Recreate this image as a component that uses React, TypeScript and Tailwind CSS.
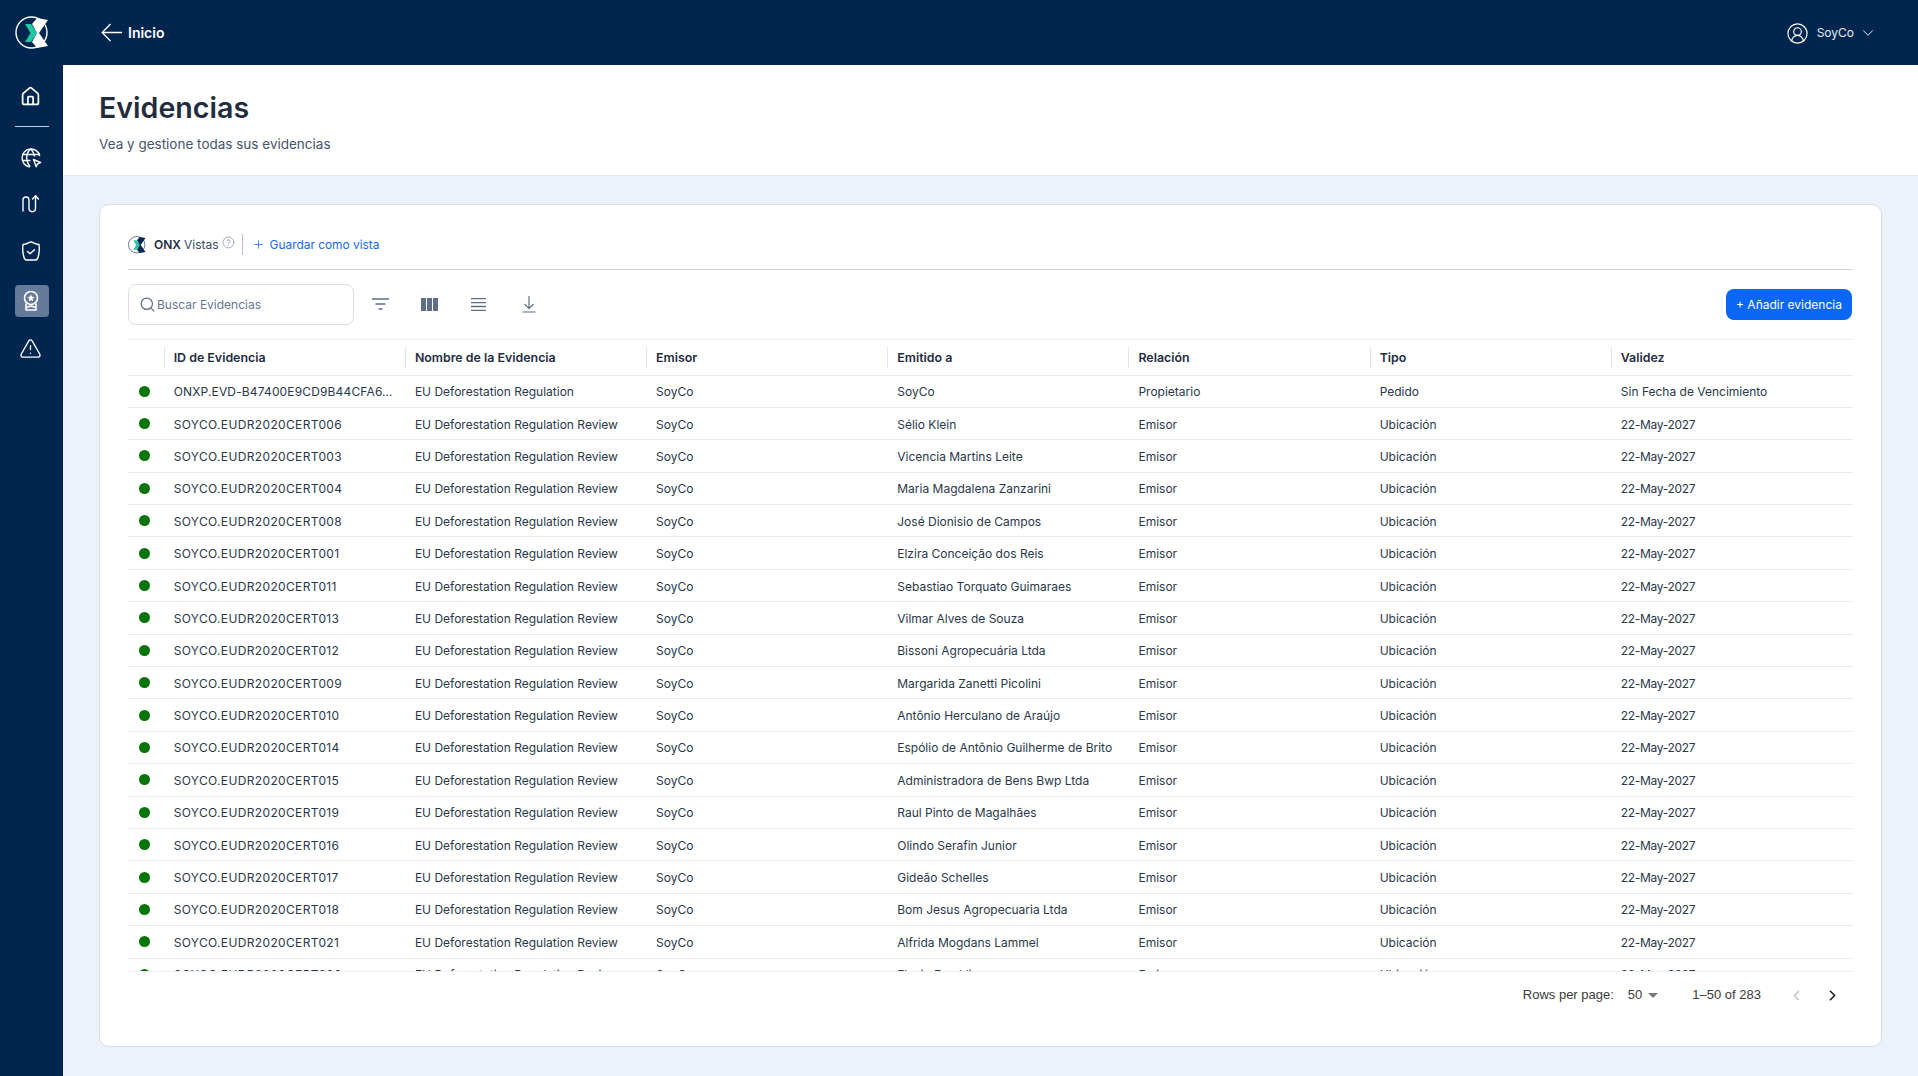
import React from "react";
import { ChevronDown, ChevronLeft, ChevronRight, CircleUserRound, Home, TriangleAlert, Search, Plus, CircleHelp } from "lucide-react";

const names = [
  ["SOYCO.EUDR2020CERT006", "Sélio Klein"],
  ["SOYCO.EUDR2020CERT003", "Vicencia Martins Leite"],
  ["SOYCO.EUDR2020CERT004", "Maria Magdalena Zanzarini"],
  ["SOYCO.EUDR2020CERT008", "José Dionisio de Campos"],
  ["SOYCO.EUDR2020CERT001", "Elzira Conceição dos Reis"],
  ["SOYCO.EUDR2020CERT011", "Sebastiao Torquato Guimaraes"],
  ["SOYCO.EUDR2020CERT013", "Vilmar Alves de Souza"],
  ["SOYCO.EUDR2020CERT012", "Bissoni Agropecuária Ltda"],
  ["SOYCO.EUDR2020CERT009", "Margarida Zanetti Picolini"],
  ["SOYCO.EUDR2020CERT010", "Antônio Herculano de Araújo"],
  ["SOYCO.EUDR2020CERT014", "Espólio de Antônio Guilherme de Brito"],
  ["SOYCO.EUDR2020CERT015", "Administradora de Bens Bwp Ltda"],
  ["SOYCO.EUDR2020CERT019", "Raul Pinto de Magalhães"],
  ["SOYCO.EUDR2020CERT016", "Olindo Serafin Junior"],
  ["SOYCO.EUDR2020CERT017", "Gideão Schelles"],
  ["SOYCO.EUDR2020CERT018", "Bom Jesus Agropecuaria Ltda"],
  ["SOYCO.EUDR2020CERT021", "Alfrida Mogdans Lammel"],
  ["SOYCO.EUDR2020CERT020", "Flavio Franklin"],
];
const rows = [
  ["ONXP.EVD-B47400E9CD9B44CFA6…", "EU Deforestation Regulation", "SoyCo", "SoyCo", "Propietario", "Pedido", "Sin Fecha de Vencimiento"],
  ...names.map(([id, to]) => [id, "EU Deforestation Regulation Review", "SoyCo", to, "Emisor", "Ubicación", "22-May-2027"]),
];
const heads = ["ID de Evidencia", "Nombre de la Evidencia", "Emisor", "Emitido a", "Relación", "Tipo", "Validez"];

function Logo({ size, dark }: { size: number; dark?: boolean }) {
  const c = dark ? "#33475f" : "#ffffff";
  return (
    <svg width={size} height={size} viewBox="0 0 34 34" fill="none">
      <circle cx="16.500" cy="16.500" r="15.500" stroke={c} strokeWidth="1.400" />
      <path d="M10 8h6l6 9-6 9h-6l5.500-9z" fill="#1fc8a0" />
      <path d="M22 2l11 2-9 13 9 13-11 2-5-6 5-9-5-9z" fill={dark ? "#002855" : "#ffffff"} />
    </svg>
  );
}

function SideItem({ children, active }: { children: React.ReactNode; active?: boolean }) {
  return (
    <div className={`w-[34px] h-[32px] flex items-center justify-center pr-[2px] rounded-[4px] ${active ? "bg-[#667a99]" : ""}`}>{children}</div>
  );
}

export default function App() {
  return (
    <div className="w-[1918px] h-[1076px] flex overflow-hidden bg-[#edf1f9] text-[#1f2d3f] [font-family:Inter,'Liberation_Sans',sans-serif]">
      <aside className="w-[63px] shrink-0 bg-[#002650] flex flex-col items-center">
        <div className="h-[65px] flex items-center justify-center"><Logo size={34} /></div>
        <div className="mt-[14px]">
          <SideItem><Home size={21} color="#fff" strokeWidth={2} className="translate-y-[1px]" /></SideItem>
        </div>
        <div className="w-[34px] h-px bg-[#c5cfdc] mt-[15px] mb-[14.500px]" />
        <div className="flex flex-col gap-[15.800px]">
          <SideItem>
            <svg width="22" height="22" viewBox="0 0 22 22" fill="none" stroke="#fff" strokeWidth="1.400">
              <path d="M19.800 9A9 9 0 1 0 10 19.900" />
              <path d="M2 7.500h17M2 13.500h8.500M10.500 2c-2.600 2.500-3.800 5.500-3.800 8.500s1.200 6.500 3.500 9M10.800 2c2.200 2.300 3.400 4.800 3.700 7.500" />
              <path d="M13.500 12.500l7 3-3 1.300-1.300 3z" strokeLinejoin="round" />
            </svg>
          </SideItem>
          <SideItem>
            <svg width="20" height="20" viewBox="0 0 20 20" fill="none" stroke="#fff" strokeWidth="1.400" strokeLinecap="round" strokeLinejoin="round" className="-translate-y-[1px]">
              <path d="M2 17V6a3 3 0 0 1 6 0v9a3.300 3.300 0 0 0 6.500 0V2" />
              <path d="M11.500 5l3-3.300 3 3.300" />
            </svg>
          </SideItem>
          <SideItem>
            <svg width="20" height="22" viewBox="0 0 20 22" fill="none" stroke="#fff" strokeWidth="1.400" strokeLinecap="round" strokeLinejoin="round" className="-translate-y-[2px]">
              <path d="M2 4.500C7 4.500 7.500 2 10 2s3 2.500 8 2.500c.5 4 .3 8-.5 11-.5 2.500-1.500 4.500-3 4.500h-9c-1.500 0-2.500-2-3-4.500-.8-3-1-7-.5-11z" />
              <path d="M6.500 11.500l2.500 2.300 4.500-4" />
            </svg>
          </SideItem>
          <SideItem active>
            <svg width="20" height="22" viewBox="0 0 20 22" fill="none" stroke="#fff" strokeWidth="1.600" strokeLinejoin="round">
              <circle cx="10" cy="8" r="6.500" />
              <path d="M10 4.500l1.100 2.300 2.400.3-1.800 1.700.5 2.400-2.200-1.200-2.200 1.200.5-2.400-1.800-1.700 2.400-.3z" fill="#fff" stroke="none" />
              <path d="M5 13.500V20h10v-6.500M5 17.500l5-1.500 5 1.500" />
            </svg>
          </SideItem>
          <SideItem><TriangleAlert size={23} color="#fff" strokeWidth={1.400} /></SideItem>
        </div>
      </aside>

      <div className="flex-1 min-w-0 flex flex-col">
        <header className="h-[65px] shrink-0 bg-[#002650] flex items-center pl-[38px] pr-[41px] text-white">
          <svg width="21" height="19" viewBox="0 0 21 19" fill="none" stroke="#fff" strokeWidth="1.300">
            <path d="M21 9.500H1.500M9.500 1L1.200 9.500 9.500 18" />
          </svg>
          <span className="ml-[6px] text-[14px] font-semibold">Inicio</span>
          <div className="ml-auto flex items-center text-[12px] pt-[1px] text-[#e8ecf2]">
            <CircleUserRound size={23} strokeWidth={1.200} color="#fff" />
            <span className="ml-[8px]">SoyCo</span>
            <ChevronDown size={18} strokeWidth={1.300} className="ml-[5px]" />
          </div>
        </header>

        <section className="h-[111px] shrink-0 bg-white border-b border-[#e3e8f0] pl-[36px] pt-[26px]">
          <h1 className="text-[28.600px] leading-[34px] font-semibold text-[#1f2d3f]">Evidencias</h1>
          <p className="mt-[9px] text-[13.500px] leading-[20px] text-[#46546a]">Vea y gestione todas sus evidencias</p>
        </section>

        <main className="flex-1 min-h-0 pl-[36px] pr-[36px] pt-[28px] pb-[29px]">
          <div className="h-full bg-white rounded-[10px] border border-[#d5dde8] px-[28px] flex flex-col">
            <div className="h-[65px] shrink-0 border-b-[1.500px] border-[#cfd8e3] flex items-center pt-[25px] pb-[10px] text-[12px]">
              <Logo size={18} dark />
              <span className="ml-[8px] font-semibold">ONX</span>
              <span className="ml-[3px] text-[#3d4a5e]">Vistas</span>
              <CircleHelp size={13} strokeWidth={1.100} className="ml-[3px] -mt-[5px] text-[#6a7a92]" />
              <span className="ml-[7px] w-px h-[21px] bg-[#b4c0d0]" />
              <Plus size={13} strokeWidth={1.400} className="ml-[9px] text-[#1469ee]" />
              <span className="ml-[5px] text-[11.900px] text-[#1469ee]">Guardar como vista</span>
            </div>

            <div className="flex items-center mt-[14px] h-[41px] shrink-0">
              <div className="w-[226px] h-[41px] rounded-[8px] border border-[#d8dfe9] flex items-center pl-[10px]">
                <Search size={17} strokeWidth={1.700} className="text-[#5e6e86]" />
                <span className="ml-[1px] pt-[1px] text-[12px] text-[#66768f]">Buscar Evidencias</span>
              </div>
              <svg width="17" height="13" viewBox="0 0 17 13" fill="none" stroke="#5f6f88" strokeWidth="1.500" className="ml-[18px]">
                <path d="M0 1h17M3.500 6h10M6.500 11h4" />
              </svg>
              <svg width="17" height="13" viewBox="0 0 17 13" fill="#5f6f88" className="ml-[32px]">
                <rect x="0" y="0" width="5" height="13" />
                <rect x="6" y="0" width="5" height="13" />
                <rect x="12" y="0" width="5" height="13" />
              </svg>
              <svg width="15" height="13" viewBox="0 0 15 13" fill="none" stroke="#5f6f88" strokeWidth="1.300" className="ml-[33px]">
                <path d="M0 .7h15M0 4.600h15M0 8.500h15M0 12.300h15" />
              </svg>
              <svg width="14" height="17" viewBox="0 0 14 17" fill="none" stroke="#5f6f88" strokeWidth="1.200" className="ml-[36px]">
                <path d="M7 0v12M2.500 8L7 12.500 11.500 8M.5 16h13" />
              </svg>
              <button className="ml-auto mr-[1px] w-[126px] h-[31px] rounded-[8px] bg-[#0a66f5] text-white text-[12px] pt-[1px]">+ Añadir evidencia</button>
            </div>

            <div className="mt-[14px] border-t border-[#edf0f5] flex-1 min-h-0 flex flex-col">
              <div className="h-[35.500px] shrink-0 flex items-center border-b border-[#e6ebf2] text-[12.400px] font-semibold">
                <div className="w-[36.700px] shrink-0 h-[21px] border-r border-[#dfe5ee]" />
                {heads.map((h, i) => (
                  <div key={h} className={`w-[241.200px] shrink-0 h-[21px] flex items-center pl-[9px] pt-[2px] ${i < 6 ? "border-r border-[#dfe5ee]" : ""}`}>{h}</div>
                ))}
              </div>
              <div className="h-[596.500px] shrink-0 overflow-hidden border-b border-[#eceff4]">
                {rows.map((r) => (
                  <div key={r[0]} className="h-[32.400px] flex items-center border-b border-[#e6ebf2] text-[12px] text-[#2a3749]">
                    <div className="w-[36.700px] shrink-0 flex justify-center pr-[3px]"><span className="w-[11px] h-[11px] rounded-full bg-[#067406]" /></div>
                    {r.map((c, i) => (
                      <div
                        key={i}
                        className={`w-[241.200px] shrink-0 pl-[9px] pr-[4px] pt-[2px] whitespace-nowrap overflow-hidden ${i === 0 ? (c.startsWith("SOYCO") ? "tracking-[0.350px]" : "tracking-[0.150px]") : ""} ${i === 6 && c.startsWith("22") ? "tracking-[-0.330px]" : ""}`}
                      >
                        {c}
                      </div>
                    ))}
                  </div>
                ))}
              </div>
              <div className="h-[48px] shrink-0 flex items-center pb-[2px] text-[13px] text-[#3a3a3a] [font-family:'Liberation_Sans',sans-serif]">
                <span className="ml-auto">Rows per page:</span>
                <span className="ml-[14px]">50</span>
                <svg width="10" height="5" viewBox="0 0 10 5" fill="#777" className="ml-[6px]"><path d="M0 0h10L5 5z" /></svg>
                <span className="ml-[34px]">1–50 of 283</span>
                <ChevronLeft size={17} strokeWidth={1.600} className="ml-[27px] text-[#bdbdbd]" />
                <ChevronRight size={17} strokeWidth={2.200} className="ml-[19px] mr-[12px] text-[#1a1a1a]" />
              </div>
            </div>
          </div>
        </main>
      </div>
    </div>
  );
}
